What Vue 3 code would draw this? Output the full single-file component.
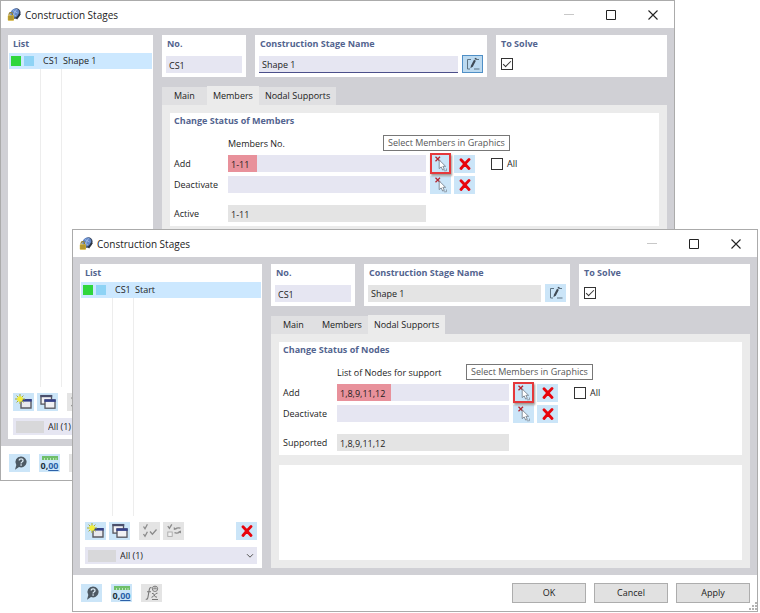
<script setup>
import { reactive } from 'vue'

const tabs = ['Main', 'Members', 'Nodal Supports']

const windows = reactive([
  {
    id: 'members',
    place: 'back',
    item: 'Shape 1',
    name: 'Shape 1',
    editing: true,
    solve: true,
    activeTab: 'Members',
    heading: 'Change Status of Members',
    column: 'Members No.',
    add: '1-11',
    markWidth: 29,
    deactivate: '',
    resultLabel: 'Active',
    result: '1-11',
    all: false
  },
  {
    id: 'supports',
    place: 'front',
    item: 'Start',
    name: 'Shape 1',
    editing: false,
    solve: true,
    activeTab: 'Nodal Supports',
    heading: 'Change Status of Nodes',
    column: 'List of Nodes for support',
    add: '1,8,9,11,12',
    markWidth: 54,
    deactivate: '',
    resultLabel: 'Supported',
    result: '1,8,9,11,12',
    all: false
  }
])
</script>

<template>
  <svg class="sprite" aria-hidden="true">
    <symbol id="i-app" viewBox="0 0 14 14">
      <ellipse cx="8.6" cy="5.6" rx="4.6" ry="5.6" transform="rotate(38 8.6 5.6)" fill="#39465f" />
      <ellipse cx="7.8" cy="5" rx="4" ry="4.9" transform="rotate(38 7.8 5)" fill="#6488c6" />
      <path d="M6 2.5 10.500 5M4.600 5 9 8M9.500 1.400 5.400 8.400" stroke="#a9c3ec" stroke-width=".8" fill="none" />
      <path d="M9.500 11 13 5.800" stroke="#2c3440" stroke-width="1.600" />
      <path d="M2 7.600V6.400a1.800 1.800 0 0 1 3.600 0V7.600" stroke="#8d7a2c" stroke-width="1.100" fill="none" />
      <rect x=".8" y="7.200" width="6.200" height="5.600" rx=".8" fill="#cfae35" />
      <path d="M1.300 9h5M1.300 11h5" stroke="#8b7626" stroke-width=".8" />
    </symbol>
    <symbol id="i-edit" viewBox="0 0 18 16">
      <path d="M7 3.500H3.500V13H6M10 13H15.500M12.500 3.500H15" stroke="#5d7383" stroke-width="1" fill="none" />
      <path d="M6.400 12.200 7 9.400 10 3.800 11.900 4.800 8.900 10.400Z" fill="#3f4a55" />
      <path d="M10.500 2.900 11.200 1.700 13 2.700 12.400 3.900Z" fill="#3f4a55" />
    </symbol>
    <symbol id="i-new" viewBox="0 0 18 16">
      <path d="M6 6h10v8H6z" fill="#e9e9ee" stroke="#5b5b63" stroke-width="1.400" />
      <path d="M7 5h9.700v2.600H7z" fill="#35418a" />
      <path d="M5 0v10M0 5h10M1.600 1.600l6.800 6.800M8.400 1.600 1.600 8.400" stroke="#a9ae2c" stroke-width="1" />
      <circle cx="5" cy="5" r="2.800" fill="#f3ee3c" />
    </symbol>
    <symbol id="i-copy" viewBox="0 0 18 16">
      <rect x="2" y="1.600" width="10.500" height="8.500" fill="#f1f1f4" stroke="#55555e" stroke-width="1.300" />
      <path d="M1.400 1h11.800v2.200H1.400z" fill="#4a4f6c" />
      <rect x="6" y="6" width="10" height="8.200" fill="#f1f1f4" stroke="#55555e" stroke-width="1.300" />
      <path d="M5.400 5.300h11.300v2.600H5.400z" fill="#35418a" />
    </symbol>
    <symbol id="i-checks" viewBox="0 0 18 16">
      <path d="M2.500 3.500 4 5.800 6.400 1.300M2.500 11 4 13.300 6.400 8.800M9 8.500l2.400 2.700L15.500 6.500" fill="none" stroke="#8b8b8b" stroke-width="1.300" />
    </symbol>
    <symbol id="i-swap" viewBox="0 0 18 16">
      <path d="M2.800 3.200 4.400 5.400 6.800 1.300M10.500 5.800q2-1.600 5-.6M9.500 9.700q3 1 5.200-.8" fill="none" stroke="#8b8b8b" stroke-width="1.300" />
      <path d="M8.800 7V4l3 2.200zM16 7.400v3l-2.800-2z" fill="#8b8b8b" />
      <rect x="2.800" y="9" width="4.400" height="4.400" fill="#f1f1f1" stroke="#aaa" stroke-width=".9" />
    </symbol>
    <symbol id="i-delete" viewBox="0 0 12 12">
      <path d="M2 1.800Q5 5 10 10.500M10 1.500Q6.500 5 2 10.500" fill="none" stroke="#e8040c" stroke-width="2.800" stroke-linecap="round" />
    </symbol>
    <symbol id="i-pick" viewBox="0 0 18 16">
      <path d="M3.500 .8 8 5.300M8 .8 3.500 5.300" stroke="#b3262f" stroke-width="1.300" />
      <path d="M7.200 4V12.600l2-1.700 1.500 3.200 1.600-.7-1.400-3.100h2.700z" fill="#fff" stroke="#6c7784" stroke-width=".8" stroke-linejoin="round" />
      <path d="M12 14.800h2.500v-2.300" fill="none" stroke="#8b99a6" stroke-width=".9" />
    </symbol>
    <symbol id="i-help" viewBox="0 0 18 16">
      <path d="M10 1.500a5.500 5.500 0 1 1-2 10.600L4 14.800 5.300 10A5.500 5.500 0 0 1 10 1.500Z" fill="#4d5963" />
      <path d="M8.200 5.600q0-1.800 1.900-1.800t1.900 1.600q0 1-1 1.600-.9.500-.9 1.400M10.100 9.300v1.400" fill="none" stroke="#dceaf4" stroke-width="1.300" />
    </symbol>
    <symbol id="i-ruler" viewBox="0 0 16 4">
      <path d="M0 0h16v4H0z" fill="#6fbf6a" />
      <path d="M2.500 2v2M5.500 2v2M8.500 2v2M11.500 2v2M14 2v2" stroke="#c4ebbf" stroke-width=".9" />
    </symbol>
    <symbol id="i-formula" viewBox="0 0 18 16">
      <path d="M8.500 2.800Q6.800 1.800 6.200 5L5 12Q4.500 15 2.800 14M4 6.800h4" fill="none" stroke="#777" stroke-width="1.100" />
      <path d="M9 8.500q1.700-.8 2.200 1.500t2.800 2.200M14.500 8.200q-1.600-.3-3 1.800t-3 2.300M9 14.500h6" fill="none" stroke="#777" stroke-width="1" />
      <circle cx="12" cy="3.800" r="2.700" fill="none" stroke="#777" stroke-width=".9" />
      <path d="M9.500 3.800h5M12 1.200V4" stroke="#777" stroke-width=".8" />
    </symbol>
    <symbol id="i-down" viewBox="0 0 8 6">
      <path d="M1 1.200 4 4.200 7 1.200" fill="none" stroke="#555" stroke-width="1" />
    </symbol>
    <symbol id="i-min" viewBox="0 0 10 10"><path d="M0 4.500h10" stroke="#c8c8c8" /></symbol>
    <symbol id="i-max" viewBox="0 0 10 10"><path d="M.5.5h9v9h-9z" fill="none" stroke="#222" /></symbol>
    <symbol id="i-close" viewBox="0 0 10 10"><path d="M.5.5l9 9M9.500.5l-9 9" stroke="#222" stroke-width="1.100" /></symbol>
  </svg>

  <main class="desktop">
    <section v-for="w in windows" :key="w.id" class="window" :class="w.place" role="dialog" :aria-labelledby="w.id + '-title'">
      <header class="titlebar">
        <svg class="app-icon"><use href="#i-app" /></svg>
        <h1 :id="w.id + '-title'">Construction Stages</h1>
        <button class="caption" aria-label="Minimize"><svg><use href="#i-min" /></svg></button>
        <button class="caption" aria-label="Maximize"><svg><use href="#i-max" /></svg></button>
        <button class="caption" aria-label="Close"><svg><use href="#i-close" /></svg></button>
      </header>

      <div class="body">
        <aside class="panel list">
          <h2>List</h2>
          <ul>
            <li>
              <i class="swatch green"></i><i class="swatch blue"></i>
              <span class="code">CS1</span><span>{{ w.item }}</span>
            </li>
          </ul>
          <div class="guides"></div>
          <div class="tools">
            <button class="tool" aria-label="New"><svg><use href="#i-new" /></svg></button>
            <button class="tool" aria-label="Copy"><svg><use href="#i-copy" /></svg></button>
            <button class="tool off apart" aria-label="Select all"><svg><use href="#i-checks" /></svg></button>
            <button class="tool off" aria-label="Invert selection"><svg><use href="#i-swap" /></svg></button>
            <button class="tool last" aria-label="Delete"><svg class="cross"><use href="#i-delete" /></svg></button>
          </div>
          <div class="filter">
            <select aria-label="Filter"><option>All (1)</option></select>
            <i class="filter-swatch"></i>
            <svg class="chevron"><use href="#i-down" /></svg>
          </div>
        </aside>

        <div class="detail">
          <div class="summary">
            <div class="panel box no">
              <label :for="w.id + '-no'">No.</label>
              <input :id="w.id + '-no'" class="field" value="CS1" />
            </div>
            <div class="panel box name">
              <label :for="w.id + '-name'">Construction Stage Name</label>
              <div class="line">
                <input :id="w.id + '-name'" v-model="w.name" class="field" :class="w.editing ? 'editing' : 'readonly'" />
                <button class="tool" :class="{ pressed: w.editing }" aria-label="Edit name"><svg><use href="#i-edit" /></svg></button>
              </div>
            </div>
            <div class="panel box solve">
              <label :for="w.id + '-solve'">To Solve</label>
              <div class="line"><input :id="w.id + '-solve'" v-model="w.solve" type="checkbox" /></div>
            </div>
          </div>

          <nav class="tabs" role="tablist">
            <button v-for="t in tabs" :key="t" role="tab" :aria-selected="t === w.activeTab" :class="{ active: t === w.activeTab }" @click="w.activeTab = t">{{ t }}</button>
          </nav>

          <div class="page">
            <div class="panel status">
              <h2>{{ w.heading }}</h2>
              <span class="column">{{ w.column }}</span>

              <label :for="w.id + '-add'">Add</label>
              <input :id="w.id + '-add'" v-model="w.add" class="field marked" :style="{ backgroundSize: w.markWidth + 'px 100%' }" />
              <div class="actions">
                <button class="tool target" aria-label="Select in graphics">
                  <svg><use href="#i-pick" /></svg>
                  <span class="tooltip" role="tooltip">Select Members in Graphics</span>
                </button>
                <button class="tool" aria-label="Clear"><svg class="cross"><use href="#i-delete" /></svg></button>
                <label class="all"><input v-model="w.all" type="checkbox" />All</label>
              </div>

              <label :for="w.id + '-off'">Deactivate</label>
              <input :id="w.id + '-off'" v-model="w.deactivate" class="field" />
              <div class="actions">
                <button class="tool" aria-label="Select in graphics"><svg><use href="#i-pick" /></svg></button>
                <button class="tool" aria-label="Clear"><svg class="cross"><use href="#i-delete" /></svg></button>
              </div>

              <label class="result" :for="w.id + '-result'">{{ w.resultLabel }}</label>
              <input :id="w.id + '-result'" class="field readonly result" :value="w.result" readonly />
            </div>
            <div class="panel blank"></div>
          </div>
        </div>
      </div>

      <footer>
        <button class="tool" aria-label="Help"><svg><use href="#i-help" /></svg></button>
        <button class="tool units" aria-label="Units">
          <svg><use href="#i-ruler" /></svg>
          <span class="digits">0,<u>00</u></span>
        </button>
        <button class="tool off" aria-label="Formula"><svg><use href="#i-formula" /></svg></button>
        <div v-if="w.place === 'front'" class="commands">
          <button class="push">OK</button>
          <button class="push">Cancel</button>
          <button class="push">Apply</button>
        </div>
        <svg v-if="w.place === 'front'" class="grip" viewBox="0 0 9 9" aria-hidden="true">
          <path d="M7 1h2M4 4h2M7 4h2M1 7h2M4 7h2M7 7h2" stroke="#b4b4b4" stroke-width="2" />
        </svg>
      </footer>
    </section>
  </main>
</template>

<style>
body {
  background: #fff;
}
</style>

<style scoped>
.sprite {
  position: absolute;
  width: 0;
  height: 0;
}
.desktop {
  display: grid;
  min-height: 100vh;
  font: 9px/14px 'Open Sans', 'Noto Sans', sans-serif;
  color: #1c1c1c;
}
.desktop * {
  box-sizing: border-box;
}
button,
input,
select {
  font: inherit;
  color: inherit;
  margin: 0;
  padding: 0;
  border: 0;
  border-radius: 0;
  outline: 0;
}
.window {
  grid-area: 1 / 1;
  isolation: isolate;
  display: flex;
  flex-direction: column;
  min-width: 0;
  border: 1px solid #ababab;
  background: #fff;
}
.back {
  margin: 0 85px 132px 0;
}
.front {
  margin: 229px 2px 1px 72px;
}
.titlebar {
  display: flex;
  align-items: center;
  height: 27px;
  padding-left: 6px;
}
.app-icon {
  width: 14px;
  height: 14px;
}
h1 {
  flex: 1;
  margin: 0 0 0 4px;
  font-size: 10px;
  font-weight: 400;
}
.caption {
  display: grid;
  place-items: center;
  width: 42px;
  height: 27px;
  background: none;
}
.caption svg {
  width: 10px;
  height: 10px;
}
.body {
  flex: 1;
  display: flex;
  gap: 9px;
  padding: 7px;
  background: #d0d0d5;
}
.panel {
  background: #fff;
}
h2,
.box > label {
  margin: 0;
  font-size: 9px;
  line-height: 14px;
  font-weight: 700;
  color: #53648f;
}
.list {
  flex: none;
  display: flex;
  flex-direction: column;
  padding-bottom: 4px;
}
.back .list {
  width: 145px;
}
.front .list {
  width: 182px;
}
.list h2 {
  padding: 2px 5px;
}
ul {
  margin: 0 1px;
  padding: 0;
  list-style: none;
}
li {
  display: flex;
  align-items: center;
  height: 16px;
  padding-left: 2px;
  background: #cce8ff;
}
.swatch {
  width: 10px;
  height: 10px;
  margin-right: 3px;
}
.green {
  background: #2fd63c;
}
.blue {
  background: #8ed3f5;
}
.code {
  width: 20px;
  margin-left: 6px;
}
.guides {
  flex: 1;
  width: 22px;
  margin: 0 0 6px 32px;
  border: solid #ededed;
  border-width: 0 1px;
}
.tools {
  display: flex;
  gap: 3px;
  padding: 0 5px;
}
.tool {
  display: grid;
  place-items: center;
  flex: none;
  width: 21px;
  height: 18px;
  background: #cbe5f8;
}
.tool svg {
  width: 18px;
  height: 16px;
}
.tool .cross {
  width: 12px;
  height: 12px;
}
.off {
  background: #e4e4e4;
}
.apart {
  margin-left: 6px;
}
.last {
  margin-left: auto;
}
.filter {
  display: grid;
  align-items: center;
  margin: 7px 5px 0;
}
.filter > * {
  grid-area: 1 / 1;
}
.filter select {
  appearance: none;
  width: 100%;
  height: 17px;
  padding-left: 35px;
  background: #e6e6f2;
}
.filter-swatch {
  width: 28px;
  height: 12px;
  margin-left: 3px;
  background: #d8d8da;
}
.chevron {
  justify-self: end;
  width: 8px;
  height: 6px;
  margin-right: 3px;
}
.detail {
  flex: 1;
  min-width: 0;
  display: flex;
  flex-direction: column;
}
.summary {
  display: flex;
  gap: 9px;
}
.box {
  display: flex;
  flex-direction: column;
  justify-content: space-between;
  height: 42px;
  padding: 2px 4px 4px;
}
.box > label {
  padding-left: 1px;
}
.no {
  width: 84px;
}
.name {
  flex: 1;
}
.solve {
  width: 171px;
}
.line {
  display: flex;
  align-items: center;
  gap: 4px;
}
.solve .line {
  height: 18px;
  padding-left: 1px;
}
.field {
  width: 100%;
  min-width: 0;
  height: 17px;
  padding: 1px 3px 0;
  background: #e6e6f2;
}
.readonly {
  background: #e4e4e4;
}
.editing {
  border-bottom: 1px solid #4b4f8a;
}
.pressed {
  border: 1px solid #4f8fc6;
  background: #bcdaf0;
}
input[type='checkbox'] {
  appearance: none;
  display: grid;
  place-items: center;
  width: 12px;
  height: 12px;
  border: 1px solid #333;
  background: #fff;
}
input[type='checkbox']:checked::after {
  content: '';
  width: 7px;
  height: 3px;
  margin-bottom: 2px;
  border: solid #333;
  border-width: 0 0 1px 1px;
  transform: rotate(-45deg);
}
.tabs {
  display: flex;
  align-items: flex-end;
  height: 28px;
}
.tabs button {
  height: 18px;
  padding: 0 6px;
  background: #e0e0e2;
  white-space: nowrap;
}
.tabs button:first-child {
  padding: 0 12px;
}
.tabs .active {
  height: 19px;
  background: #ebebeb;
}
.page {
  flex: 1;
  display: flex;
  flex-direction: column;
  gap: 10px;
  padding: 8px;
  background: #ebebeb;
}
.status {
  display: grid;
  grid-template-columns: 54px 1fr 233px;
  grid-template-rows: 20px 14px 17px 17px 25px;
  row-gap: 4px;
  align-items: center;
  padding: 0 0 4px 4px;
}
.status h2 {
  grid-column: 1 / -1;
  align-self: start;
  padding-top: 1px;
}
.column {
  grid-column: 2 / -1;
}
.marked {
  background: linear-gradient(#e8919b, #e8919b) no-repeat left / 0 100% #e6e6f2;
}
.result {
  align-self: end;
  line-height: 17px;
}
.actions {
  display: flex;
  align-items: center;
  gap: 3px;
  height: 17px;
  padding-left: 4px;
}
.target {
  position: relative;
  height: 21px;
  border: 2px solid #e5383b;
  box-shadow: 1px 2px 2px #999;
}
.tooltip {
  position: absolute;
  left: -49px;
  bottom: 21px;
  padding: 0 4px;
  border: 1px solid #777;
  background: #fff;
  color: #575757;
  white-space: nowrap;
}
.all {
  display: flex;
  align-items: center;
  gap: 4px;
  margin-left: 13px;
}
.blank {
  flex: 1;
}
footer {
  position: relative;
  display: flex;
  align-items: center;
  gap: 9px;
  height: 36px;
  padding: 0 7px 0 8px;
}
.back footer {
  height: 34px;
}
.units {
  align-content: center;
}
.units svg {
  width: 16px;
  height: 4px;
}
.digits {
  line-height: 11px;
  font-weight: 700;
  color: #22303c;
}
.digits u {
  color: #2c61a8;
}
.commands {
  display: flex;
  gap: 8px;
  margin-left: auto;
}
.push {
  width: 74px;
  height: 20px;
  border: 1px solid #adadad;
  background: #e1e1e1;
}
.grip {
  position: absolute;
  right: 0;
  bottom: 0;
  width: 9px;
  height: 9px;
}
</style>
